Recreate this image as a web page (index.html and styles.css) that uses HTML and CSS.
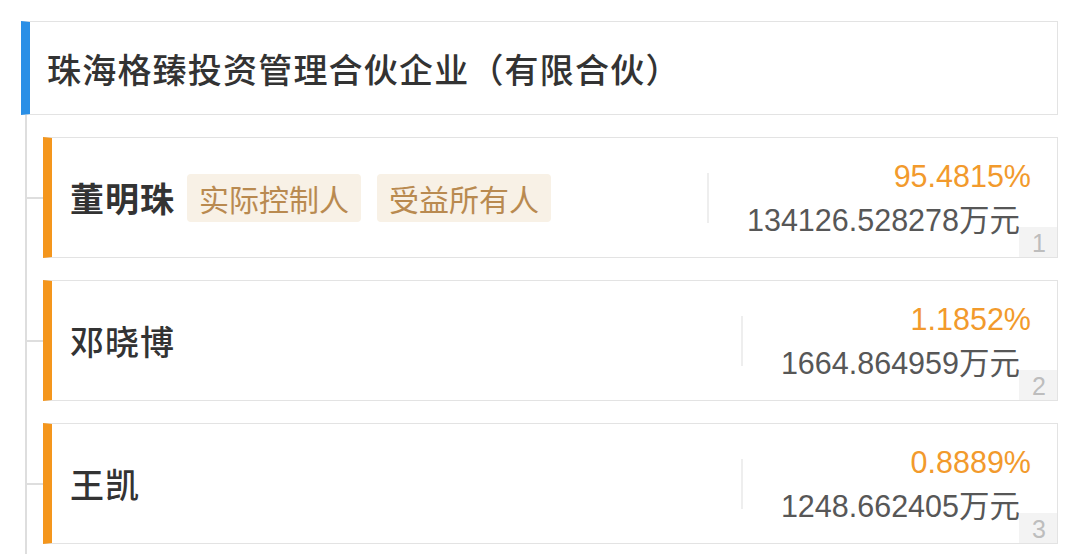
FILE: index.html
```html
<!DOCTYPE html>
<html lang="zh-CN">
<head>
<meta charset="utf-8">
<title>股东信息</title>
<link rel="stylesheet" href="styles.css">
</head>
<body>
<div class="page">
  <div class="company">珠海格臻投资管理合伙企业（有限合伙）</div>
  <div class="tree">
    <div class="card">
      <div class="name strong">董明珠</div>
      <div class="tags">
        <span class="tag">实际控制人</span>
        <span class="tag">受益所有人</span>
      </div>
      <div class="stake">
        <div class="pct">95.4815%</div>
        <div class="amt">134126.528278万元</div>
      </div>
      <span class="idx">1</span>
    </div>
    <div class="card">
      <div class="name">邓晓博</div>
      <div class="stake">
        <div class="pct">1.1852%</div>
        <div class="amt">1664.864959万元</div>
      </div>
      <span class="idx">2</span>
    </div>
    <div class="card">
      <div class="name">王凯</div>
      <div class="stake">
        <div class="pct">0.8889%</div>
        <div class="amt">1248.662405万元</div>
      </div>
      <span class="idx">3</span>
    </div>
  </div>
</div>
</body>
</html>
```

FILE: styles.css
```css
html, body {
  margin: 0;
  padding: 0;
  background: #ffffff;
}
body {
  width: 1080px;
  height: 554px;
  overflow: hidden;
  font-family: "Noto Sans CJK SC", "Liberation Sans", sans-serif;
  color: #333333;
}
.page {
  padding: 21px 22px 0 21px;
}
.company {
  height: 92px;
  border: 1px solid #e3e3e3;
  border-left: 9px solid #2a8fe6;
  display: flex;
  align-items: center;
  padding-left: 17px;
  font-size: 34px;
  font-weight: 500;
  color: #333333;
  letter-spacing: 1.2px;
}
.tree {
  margin-left: 4px;
  border-left: 2px solid #dedede;
  padding: 22px 0 20px 16px;
  display: flex;
  flex-direction: column;
  gap: 22px;
}
.card {
  position: relative;
  height: 119px;
  border: 1px solid #e3e3e3;
  border-left: 9px solid #f4961d;
  display: flex;
  align-items: center;
  padding-left: 18px;
}
.card::before {
  content: "";
  position: absolute;
  left: -27px;
  top: 59px;
  width: 18px;
  height: 2px;
  background: #dedede;
}
.name {
  font-size: 34px;
  font-weight: 500;
  color: #333333;
  letter-spacing: 1px;
}
.name.strong {
  font-weight: 700;
}
.tags {
  display: flex;
  gap: 16px;
  margin-left: 12px;
}
.tag {
  height: 48px;
  display: flex;
  align-items: center;
  padding: 0 12px;
  background: #f8f1e6;
  border-radius: 4px;
  color: #b98a50;
  font-size: 30px;
}
.stake {
  margin-left: auto;
  border-left: 2px solid #eeeeee;
  padding: 0 26px 0 38px;
  height: 50px;
  display: flex;
  flex-direction: column;
  justify-content: center;
  align-items: flex-end;
  font-family: "Liberation Sans", "Noto Sans CJK SC", sans-serif;
}
.pct {
  font-size: 30.5px;
  line-height: 44px;
  color: #f29a2c;
}
.amt {
  font-size: 30.5px;
  line-height: 44px;
  color: #575757;
  margin-right: 11px;
}
.idx {
  position: absolute;
  right: 0;
  bottom: 0;
  width: 38px;
  height: 30px;
  background: #f3f3f3;
  color: #bdbdbd;
  font-family: "Liberation Sans", sans-serif;
  font-size: 25px;
  line-height: 32px;
  text-align: right;
  padding-right: 11px;
  box-sizing: border-box;
}
```
